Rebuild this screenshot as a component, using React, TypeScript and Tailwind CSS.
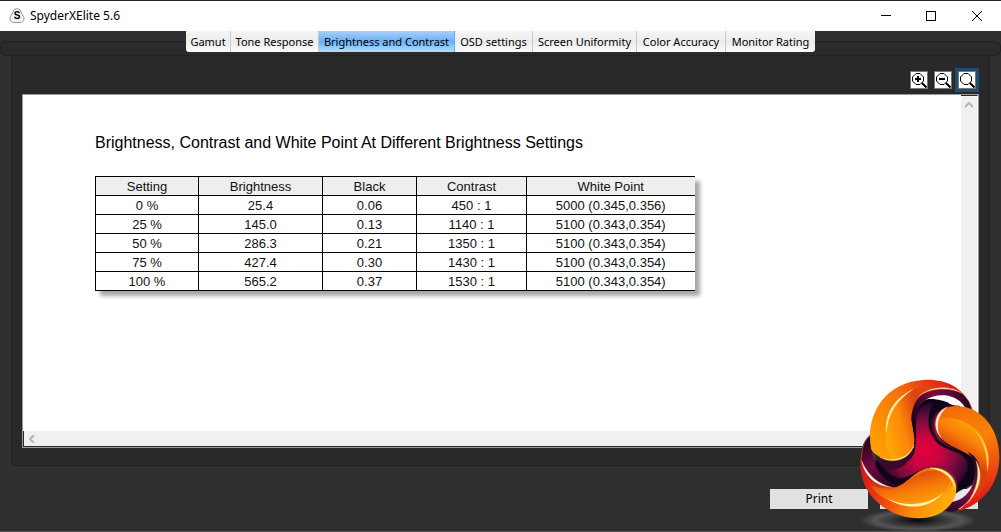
import React, { useState } from 'react';

const tabs = [
  { label: 'Gamut', width: 'w-[45px]' },
  { label: 'Tone Response', width: 'w-[88px]' },
  { label: 'Brightness and Contrast', width: 'w-[136px]' },
  { label: 'OSD settings', width: 'w-[78px]' },
  { label: 'Screen Uniformity', width: 'w-[104px]' },
  { label: 'Color Accuracy', width: 'w-[89px]' },
  { label: 'Monitor Rating', width: 'w-[89px]' },
];

const columns = [
  { label: 'Setting', width: 'w-[103px]' },
  { label: 'Brightness', width: 'w-[124px]' },
  { label: 'Black', width: 'w-[94px]' },
  { label: 'Contrast', width: 'w-[110px]' },
  { label: 'White Point', width: 'w-[168px]' },
];

const rows = [
  ['0 %', '25.4', '0.06', '450 : 1', '5000 (0.345,0.356)'],
  ['25 %', '145.0', '0.13', '1140 : 1', '5100 (0.343,0.354)'],
  ['50 %', '286.3', '0.21', '1350 : 1', '5100 (0.343,0.354)'],
  ['75 %', '427.4', '0.30', '1430 : 1', '5100 (0.343,0.354)'],
  ['100 %', '565.2', '0.37', '1530 : 1', '5100 (0.343,0.354)'],
];

const TitleBar: React.FC = () => (
  <header className="flex h-[31px] shrink-0 items-center border-t border-[#242424] bg-white pr-px pl-[9px] text-black">
    <span className="relative flex h-4 w-4 items-center justify-center">
      <svg viewBox="0 0 16 16" className="absolute inset-0 h-4 w-4" fill="#f4f4f4" stroke="#999">
        <path d="M5 1.5Q8-.2 11 1.5L12.5 5l2.5 4.5Q15.8 13 12.5 14.5h-9Q.2 13 1 9.5L3.5 5Z" />
      </svg>
      <span className="relative font-['Liberation_Sans',sans-serif] text-[10px] leading-none font-bold">S</span>
    </span>
    <h1 className="ml-[5px] text-[12px] leading-4">SpyderXElite 5.6</h1>
    <div className="ml-auto flex">
      <button aria-label="Minimize" className="flex h-[30px] w-[45px] items-center justify-center">
        <svg className="h-[10px] w-[10px]" viewBox="0 0 10 10" stroke="black" shapeRendering="crispEdges">
          <path d="M0 4.5h10" />
        </svg>
      </button>
      <button aria-label="Maximize" className="flex h-[30px] w-[45px] items-center justify-center">
        <svg className="h-[10px] w-[10px]" viewBox="0 0 10 10" stroke="black" fill="none" shapeRendering="crispEdges">
          <path d="M.5.5h9v9h-9z" />
        </svg>
      </button>
      <button aria-label="Close window" className="flex h-[30px] w-[47px] items-center justify-center">
        <svg className="h-[10px] w-[10px]" viewBox="0 0 10 10" stroke="black">
          <path d="M0 0l10 10M10 0L0 10" />
        </svg>
      </button>
    </div>
  </header>
);

const ZoomIcon: React.FC<{ sign?: 'plus' | 'minus' }> = ({ sign }) => (
  <svg viewBox="0 0 16 16" className="h-4 w-4" fill="none" stroke="black">
    <path d="M5 1.5h4L12.5 5v4L9 12.5H5L1.5 9V5Z" />
    <path d="M11 11l4.5 4.5" strokeWidth="2.2" />
    {sign && <path d="M4 7h6" strokeWidth="2" />}
    {sign === 'plus' && <path d="M7 4v6" strokeWidth="2" />}
  </svg>
);

const Logo: React.FC = () => (
  <svg viewBox="0 0 453 486" className="pointer-events-none absolute right-0 bottom-0 h-[162px] w-[151px]" aria-hidden="true">
    <defs>
      <radialGradient id="floor">
        <stop offset="0" stopColor="#060606" />
        <stop offset=".35" stopColor="#2c2c2c" />
        <stop offset=".75" stopColor="#555" />
        <stop offset="1" stopColor="#555" stopOpacity="0" />
      </radialGradient>
      <radialGradient id="core" gradientUnits="userSpaceOnUse" cx="226" cy="245" r="160">
        <stop offset="0" stopColor="#e3003f" />
        <stop offset=".3" stopColor="#c80440" />
        <stop offset=".6" stopColor="#790a3e" />
        <stop offset=".85" stopColor="#2e082f" />
        <stop offset="1" stopColor="#14041c" />
      </radialGradient>
      <linearGradient id="topLobe" gradientUnits="userSpaceOnUse" x1="80" y1="230" x2="330" y2="60">
        <stop offset="0" stopColor="#ff9d05" />
        <stop offset=".45" stopColor="#f8760a" />
        <stop offset=".75" stopColor="#ea3b14" />
        <stop offset="1" stopColor="#d81a1c" />
      </linearGradient>
      <linearGradient id="topInner" gradientUnits="userSpaceOnUse" x1="105" y1="180" x2="210" y2="150">
        <stop offset="0" stopColor="#ffa406" />
        <stop offset=".5" stopColor="#fb8708" />
        <stop offset="1" stopColor="#dd4410" />
      </linearGradient>
      <linearGradient id="rightLobe" gradientUnits="userSpaceOnUse" x1="310" y1="105" x2="400" y2="400">
        <stop offset="0" stopColor="#f26a0a" />
        <stop offset=".35" stopColor="#fb8208" />
        <stop offset=".65" stopColor="#f2520f" />
        <stop offset="1" stopColor="#dc1518" />
      </linearGradient>
      <linearGradient id="rightInner" gradientUnits="userSpaceOnUse" x1="310" y1="245" x2="365" y2="160">
        <stop offset="0" stopColor="#dd410b" />
        <stop offset=".5" stopColor="#f87f08" />
        <stop offset="1" stopColor="#ffa207" />
      </linearGradient>
      <linearGradient id="bottomLobe" gradientUnits="userSpaceOnUse" x1="40" y1="290" x2="270" y2="420">
        <stop offset="0" stopColor="#d9151b" />
        <stop offset=".4" stopColor="#ee4611" />
        <stop offset=".7" stopColor="#fb8508" />
        <stop offset="1" stopColor="#ffab08" />
      </linearGradient>
      <linearGradient id="bottomInner" gradientUnits="userSpaceOnUse" x1="210" y1="300" x2="235" y2="405">
        <stop offset="0" stopColor="#df450c" />
        <stop offset=".5" stopColor="#f77b08" />
        <stop offset="1" stopColor="#ffa607" />
      </linearGradient>
      <linearGradient id="rimTop" gradientUnits="userSpaceOnUse" x1="190" y1="150" x2="360" y2="100">
        <stop offset="0" stopColor="#1c0520" />
        <stop offset=".45" stopColor="#7c0b40" />
        <stop offset=".75" stopColor="#58093a" />
        <stop offset="1" stopColor="#1c0520" />
      </linearGradient>
      <linearGradient id="rimLeft" gradientUnits="userSpaceOnUse" x1="50" y1="200" x2="130" y2="350">
        <stop offset="0" stopColor="#1c0520" />
        <stop offset=".5" stopColor="#720a3e" />
        <stop offset="1" stopColor="#26062a" />
      </linearGradient>
      <linearGradient id="rimRight" gradientUnits="userSpaceOnUse" x1="390" y1="290" x2="300" y2="425">
        <stop offset="0" stopColor="#2a062c" />
        <stop offset=".45" stopColor="#8c0d44" />
        <stop offset="1" stopColor="#26062a" />
      </linearGradient>
    </defs>

    <ellipse cx="204" cy="451" rx="174" ry="35" fill="url(#floor)" />

    {/* three armed centre with its dark shadow edge */}
    <path
      d="M186 150C192 108 222 78 262 86C292 90 318 98 331 110C290 112 254 145 264 185C274 217 325 222 357 246C386 268 378 318 366 340C352 354 330 360 316 372C318 330 291 296 253 296C206 300 187 345 145 351C104 350 76 312 72 268C92 284 148 284 176 264C204 244 189 203 186 180Z"
      fill="#100417"
    />
    <path
      d="M200 142C204 112 226 94 250 100C233 126 230 172 246 194C260 232 299 238 327 250C352 262 362 290 346 312C339 330 332 337 322 340C312 304 287 288 250 290C207 292 190 320 152 324C124 322 104 302 98 288C134 292 178 284 191 253C202 225 194 181 200 142Z"
      fill="url(#core)"
    />

    {/* gaps seen through the ring */}
    <path d="M235 86Q252 76 275 76Q314 80 330 108Q304 108 292 97Q266 86 235 86Z" fill="#fff" />
    <path d="M369 344Q354 382 314 397Q312 380 328 367Q350 359 369 344Z" fill="#e9e9e9" />
    <path d="M62 211Q56 245 76 280Q80 246 62 211Z" fill="#3a3a3a" />

    {/* shaded collars where each arm meets its lobe */}
    <path d="M331 108C288 103 242 124 244 168C246 214 290 232 334 243C290 226 262 212 259 181C251 144 276 112 331 108Z" fill="#480a34" />
    <path d="M306 108C270 112 250 138 252 170C254 196 268 214 290 224C266 204 257 190 258 168C258 138 276 118 306 108Z" fill="#9c1640" />
    <path d="M78 264C108 283 160 280 188 240C186 276 150 304 112 298Q90 290 78 264Z" fill="#3b0829" />
    <path d="M222 294C274 272 330 304 322 362C318 322 284 292 222 300Z" fill="#861440" />

    {/* top lobe */}
    <path d="M62 235C46 127 110 36 220 30C285 26 338 52 360 104C334 64 291 48 250 59C209 69 187 100 186 142C183 176 198 196 191 224C181 267 128 283 88 260Q68 250 62 235Z" fill="url(#topLobe)" />
    <path d="M124 268C92 210 102 135 150 84C184 52 232 44 272 53C221 58 187 91 186 142C182 178 198 199 191 224C184 254 156 270 124 268Z" fill="url(#topInner)" />
    <path d="M109 190C102 134 132 84 192 56C142 88 113 130 109 190Z" fill="#fff0a8" />
    <path d="M90 261C130 279 176 264 190 228C180 268 128 284 90 261Z" fill="#fffbe0" stroke="#ffc23e" strokeWidth="1.5" />
    <path d="M184 152C184 90 222 55 272 52C326 53 358 80 368 122Q358 118 345 112C333 92 312 80 285 76C246 72 212 92 203 122Q200 140 190 172Z" fill="url(#rimTop)" />
    <path d="M205 80C236 48 300 42 340 72C302 52 246 50 205 80Z" fill="#fff2ba" stroke="#f36a26" strokeWidth="1.5" />
    <path d="M340 72Q360 92 366 118" fill="none" stroke="#f0802c" strokeWidth="2" />

    {/* right lobe */}
    <path d="M259 178C247 138 276 108 321 108C396 111 446 175 448 257C450 337 401 405 320 425C366 392 396 343 391 300C383 257 346 241 310 227C284 217 266 203 259 178Z" fill="url(#rightLobe)" />
    <path d="M262 152C290 138 339 145 370 172C412 206 424 262 411 313C404 344 396 366 375 382C397 351 399 305 380 277C356 244 304 234 279 211Q256 190 262 152Z" fill="url(#rightInner)" />
    <path d="M376 182C412 214 424 262 411 306C413 254 400 214 376 182Z" fill="#ffc94c" />
    <path d="M292 111C254 124 246 178 274 204C256 176 260 136 292 111Z" fill="#fff" stroke="#ff9d4a" strokeWidth="1.5" />

    {/* rim under the right lobe */}
    <path d="M352 246C392 262 398 306 384 342C368 386 342 412 308 425Q292 426 280 420Q298 408 306 396C336 390 360 370 370 338C380 300 374 268 352 246Z" fill="url(#rimRight)" />
    <path d="M378 272C402 308 392 360 350 402C382 358 390 314 378 272Z" fill="#fff4b8" stroke="#ff8a30" strokeWidth="1.5" />

    {/* bottom lobe */}
    <path d="M32 262C38 312 68 345 112 352C160 358 177 318 216 300C258 282 309 303 318 345C325 381 296 424 251 438C170 462 76 419 43 342Q28 305 32 262Z" fill="url(#bottomLobe)" />
    <path d="M62 346C98 358 133 364 166 340C196 317 226 297 258 301C290 306 307 322 308 342C294 385 236 413 182 408C129 403 82 382 62 346Z" fill="url(#bottomInner)" />
    <path d="M112 386C172 414 240 404 282 366C242 416 172 424 112 386Z" fill="#fff3b0" />
    <path d="M306 322Q302 356 272 384" fill="none" stroke="#ffb02c" strokeWidth="2" />
    <path d="M240 294C286 290 320 322 316 362C310 326 284 302 240 294Z" fill="#fff3a8" stroke="#ffb640" strokeWidth="1.5" />

    {/* rim on the left */}
    <path d="M60 196C26 222 24 286 60 328C84 350 122 358 150 346C110 342 78 306 74 274Q59 240 60 196Z" fill="url(#rimLeft)" />
    <path d="M34 270C42 318 76 350 128 353C84 342 54 318 34 270Z" fill="#fff" stroke="#ff7a30" strokeWidth="1.5" />
    <path d="M60 197Q34 220 34 268" fill="none" stroke="#e8452a" strokeWidth="2" />
  </svg>
);

const Report: React.FC = () => (
  <section className="min-w-0 flex-1 overflow-hidden pt-[38px] pl-[72px] font-['Liberation_Sans',Arial,sans-serif] text-black">
    <h2 className="text-[16px] leading-5">Brightness, Contrast and White Point At Different Brightness Settings</h2>
    <table className="mt-[23px] w-[599px] table-fixed border-collapse text-center text-[13px] leading-[17px] text-[#111] shadow-[5px_5px_4px_rgba(0,0,0,0.35)]">
      <thead>
        <tr className="bg-[#eee]">
          {columns.map((column) => (
            <th key={column.label} className={`${column.width} border border-r-0 border-black p-0 pt-px font-normal`}>
              {column.label}
            </th>
          ))}
        </tr>
      </thead>
      <tbody>
        {rows.map((row) => (
          <tr key={row[0]} className="bg-white">
            {row.map((value, i) => (
              <td key={i} className="border border-r-0 border-black p-0 pt-px">{value}</td>
            ))}
          </tr>
        ))}
      </tbody>
    </table>
  </section>
);

const App: React.FC = () => {
  const [activeTab, setActiveTab] = useState('Brightness and Contrast');

  return (
    <div className="relative flex min-h-screen flex-col overflow-hidden bg-[#2f2f2f] font-['Noto_Sans','Open_Sans',sans-serif] text-[12px] text-black">
      <TitleBar />

      {/* Tab strip sits over the recessed bar */}
      <div className="grid h-[25px] shrink-0 grid-cols-1">
        <div className="mt-[10px] rounded-md border border-[#202020] bg-[#2b2b2b] [grid-area:1/1]" />
        <nav className="z-10 flex h-[21px] justify-self-center overflow-hidden rounded-b-[3px] [grid-area:1/1]">
          {tabs.map((tab) => (
            <button
              key={tab.label}
              onClick={() => setActiveTab(tab.label)}
              className={`${tab.width} h-full border-r text-[11px] leading-5 whitespace-nowrap last:border-r-0 ${
                activeTab === tab.label
                  ? 'border-[#62a9ee] bg-linear-to-b from-[#a9cff7] via-[#68b0f7] to-[#b3e0ff]'
                  : 'border-[#c8c8c8] bg-linear-to-b from-[#f5f5f5] via-[#ececec] to-[#fafafa]'
              }`}
            >
              {tab.label}
            </button>
          ))}
        </nav>
      </div>

      <main className="mx-[11px] flex flex-1 flex-col rounded-b-md border border-t-0 border-[#202020] bg-[#292929] px-[10px] pb-[17px]">
        <div className="flex h-[38px] shrink-0 items-center justify-end gap-[6px] pt-[10px] pr-[3px]">
          <button aria-label="Zoom in" className="flex h-[18px] w-[18px] items-center justify-center border border-[#777] bg-white">
            <ZoomIcon sign="plus" />
          </button>
          <button aria-label="Zoom out" className="flex h-[18px] w-[18px] items-center justify-center border border-[#777] bg-white">
            <ZoomIcon sign="minus" />
          </button>
          <button aria-label="Actual size" className="flex h-[18px] w-[18px] items-center justify-center border border-[#777] bg-white ring-3 ring-[#244b6b]">
            <ZoomIcon />
          </button>
        </div>

        <div className="flex flex-1 flex-col border border-[#999] bg-white">
          <div className="flex flex-1">
            <Report />
            <div className="flex w-[17px] justify-center border-t border-r border-t-[#292929] border-r-white bg-[#f0f0f0] pt-[6px]">
              <svg viewBox="0 0 8 6" className="h-[6px] w-2" fill="none" stroke="#b5b5b5" strokeWidth="2">
                <path d="M0 5l4-4 4 4" />
              </svg>
            </div>
          </div>
          <div className="flex h-4 shrink-0 items-center border-b border-l border-[#292929] bg-[#f0f0f0] pl-[5px]">
            <svg viewBox="0 0 6 8" className="h-2 w-[6px]" fill="none" stroke="#b5b5b5" strokeWidth="2">
              <path d="M5 0L1 4l4 4" />
            </svg>
          </div>
        </div>
      </main>

      <footer className="flex h-[66px] shrink-0 justify-end gap-3 border-b border-[#555] pt-[23px] pr-[23px]">
        <button className="h-5 w-[98px] bg-[#e1e1e1] text-[12px] leading-5">Print</button>
        <button aria-label="Close" className="h-5 w-[98px] bg-[#e1e1e1]" />
      </footer>

      <Logo />
    </div>
  );
};

export default App;
